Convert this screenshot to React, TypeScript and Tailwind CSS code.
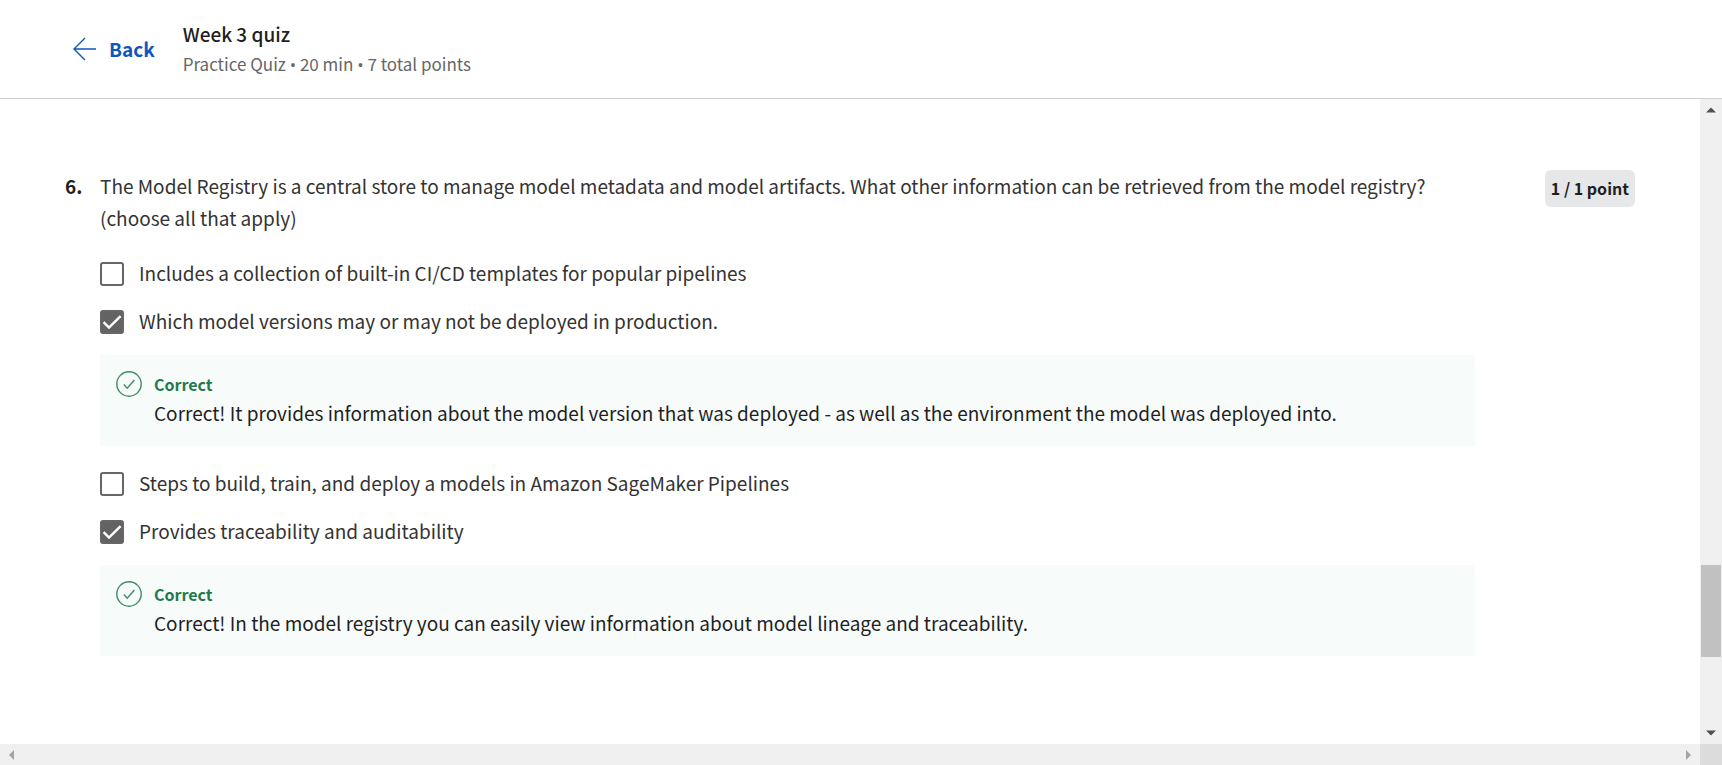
import { useState } from "react";

type Option = { id: string; label: string; checked: boolean; feedback?: string };

const OPTIONS: Option[] = [
  { id: "templates", label: "Includes a collection of built-in CI/CD templates for popular pipelines", checked: false },
  {
    id: "versions",
    label: "Which model versions may or may not be deployed in production.",
    checked: true,
    feedback:
      "Correct! It provides information about the model version that was deployed - as well as the environment the model was deployed into.",
  },
  { id: "steps", label: "Steps to build, train, and deploy a models in Amazon SageMaker Pipelines", checked: false },
  {
    id: "traceability",
    label: "Provides traceability and auditability",
    checked: true,
    feedback: "Correct! In the model registry you can easily view information about model lineage and traceability.",
  },
];

function Bullet() {
  return <span className="font-['Open_Sans',sans-serif]">•</span>;
}

function Header() {
  return (
    <header className="flex items-center border-b border-[#d0d0d0] bg-white pt-5 pb-[17px] pl-[73px]">
      <a href="#back" className="flex items-center gap-3 pb-1 text-[19px] leading-7 font-bold text-[#0f56bf]">
        <svg className="h-6 w-6" viewBox="0 0 24 24" fill="none" stroke="currentColor" strokeWidth="1.4" aria-hidden="true">
          <path d="M23 12H1.5M12 1 1 12l11 11" />
        </svg>
        Back
      </a>
      <div className="ml-7">
        <h1 className="text-[19px] leading-7 font-medium text-[#1f1f1f]">Week 3 quiz</h1>
        <p className="text-[17px] leading-8 text-[#666666]">
          Practice Quiz <Bullet /> 20 min <Bullet /> 7 total points
        </p>
      </div>
    </header>
  );
}

function Feedback({ text }: { text: string }) {
  return (
    <div className="mt-[9px] mb-[14px] flex gap-3 bg-[#f7fbf9] px-4 pt-4 pb-[17px]">
      <svg className="h-[26px] w-[26px] shrink-0 text-[#3f8c68]" viewBox="0 0 26 26" fill="none" stroke="currentColor" strokeWidth="1.4" aria-hidden="true">
        <circle cx="13" cy="13" r="12.2" />
        <path d="M7.8 13.6l3.4 3.6 7.2-8.2" />
      </svg>
      <div>
        <p className="text-base leading-[26px] font-bold text-[#1f7a4d]">Correct</p>
        <p className="text-[19px] leading-8 text-[#1f1f1f]">{text}</p>
      </div>
    </div>
  );
}

function OptionRow({ option }: { option: Option }) {
  const [checked, setChecked] = useState(option.checked);
  return (
    <li>
      <div className="flex min-h-12 items-center gap-[15px]">
        <span className="relative flex h-6 w-6 shrink-0">
          <input
            id={option.id}
            type="checkbox"
            checked={checked}
            onChange={(e) => setChecked(e.target.checked)}
            className="h-6 w-6 appearance-none rounded-[3px] border-2 border-[#666666] bg-white checked:bg-[#636363]"
          />
          {checked && (
            <svg className="pointer-events-none absolute inset-0 h-6 w-6" viewBox="0 0 24 24" fill="none" stroke="#fff" strokeWidth="2.4" aria-hidden="true">
              <path d="M3.6 12.2l5.4 5.4L20.6 6.2" />
            </svg>
          )}
        </span>
        <label htmlFor={option.id} className="pb-0.5 text-[19px] leading-8 text-[#333333]">
          {option.label}
        </label>
      </div>
      {option.feedback && <Feedback text={option.feedback} />}
    </li>
  );
}

function Arrow({ label, points, className }: { label: string; points: string; className: string }) {
  return (
    <button type="button" aria-label={label} className={className}>
      <svg className="h-[10px] w-[10px]" viewBox="0 0 10 10" fill="currentColor" aria-hidden="true">
        <polygon points={points} />
      </svg>
    </button>
  );
}

export default function App() {
  return (
    <div className="flex min-h-screen flex-col bg-white font-['Noto_Sans_CJK_SC',sans-serif]">
      <Header />
      <div className="flex flex-1">
        <main className="flex min-w-0 flex-1 items-start px-[65px] pt-[71px]">
          <span className="w-[35px] shrink-0 text-[19px] leading-8 font-bold text-[#1f1f1f]">6.</span>
          <section className="min-w-0 flex-1">
            <h2 className="text-[19px] leading-8 font-normal text-[#333333]">
              The Model Registry is a central store to manage model metadata and model artifacts. What other information can be
              retrieved from the model registry? (choose all that apply)
            </h2>
            <ul className="mt-4">
              {OPTIONS.map((o) => (
                <OptionRow key={o.id} option={o} />
              ))}
            </ul>
          </section>
          <span className="ml-[70px] shrink-0 rounded-md bg-[#e5e7e8] px-[6px] text-base leading-[37px] font-bold text-[#1f1f1f]">
            1 / 1 point
          </span>
        </main>
        <div className="flex w-[22px] shrink-0 flex-col items-center justify-between bg-[#f0f0f0]">
          <Arrow label="Scroll up" points="0,7.5 5,2.5 10,7.5" className="flex h-[22px] w-full items-center justify-center text-[#505050]" />
          <div className="flex w-full flex-1 flex-col px-px">
            <div className="grow-[444]" />
            <div className="h-[92px] bg-[#c1c1c1]" />
            <div className="grow-[65]" />
          </div>
          <Arrow label="Scroll down" points="0,2.5 5,7.5 10,2.5" className="flex h-[22px] w-full items-center justify-center text-[#505050]" />
        </div>
      </div>
      <div className="flex h-[21px] bg-[#f0f0f0]">
        <Arrow label="Scroll left" points="8,0 3,5 8,10" className="flex w-[22px] items-center justify-center text-[#a3a3a3]" />
        <div className="flex-1" />
        <Arrow label="Scroll right" points="2,0 7,5 2,10" className="flex w-[22px] items-center justify-center text-[#a3a3a3]" />
        <div className="w-[22px] bg-[#dcdcdc]" />
      </div>
    </div>
  );
}
